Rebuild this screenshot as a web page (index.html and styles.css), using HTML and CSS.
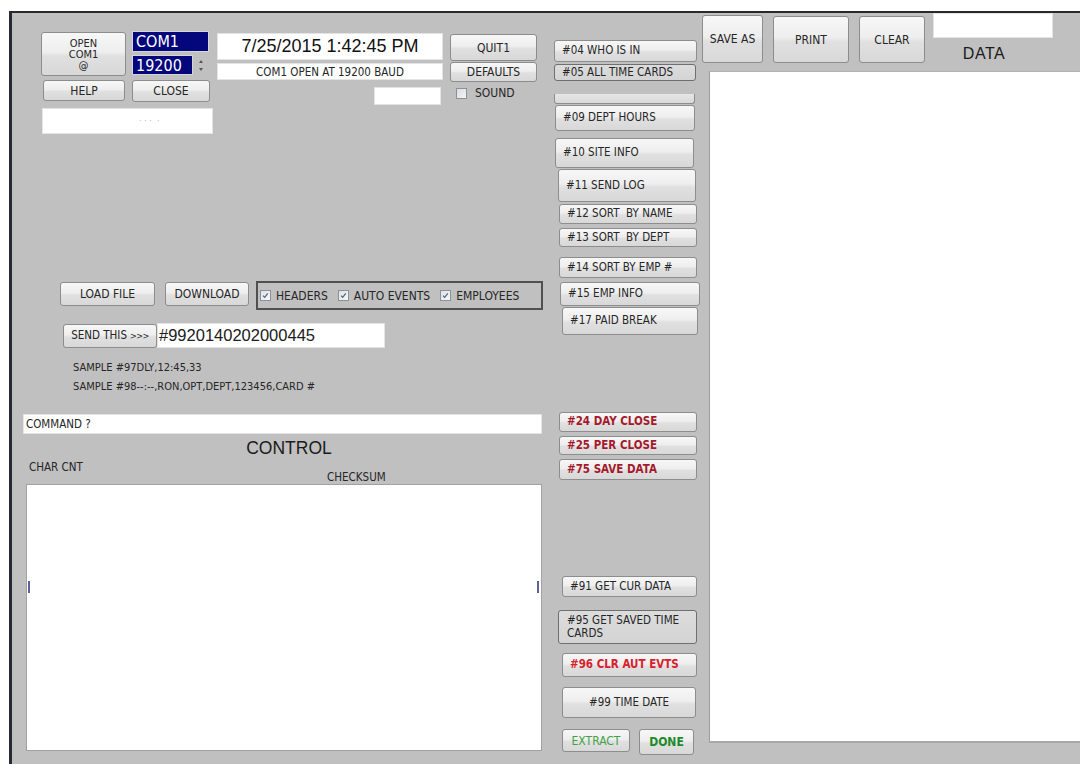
FILE: index.html
```html
<!DOCTYPE html>
<html lang="en">
<head>
<meta charset="utf-8">
<title>Time Clock Terminal</title>
<link rel="stylesheet" href="styles.css">
</head>
<body>
<div class="window">

  <!-- connection, file transfer and command console -->
  <div class="pane-left">
    <div class="conn">
      <div class="conn-port">
        <div class="port-row">
          <button class="btn btn-open"><span>OPEN<br>COM1<br>@</span></button>
          <div class="port-select">
            <div class="navy navy-port">COM1</div>
            <div class="spin">
              <div class="navy navy-baud">19200</div>
              <div class="spin-arrows"><span class="arrow-up"></span><span class="arrow-down"></span></div>
            </div>
          </div>
        </div>
        <div class="help-row">
          <button class="btn btn-help">HELP</button>
          <button class="btn btn-close">CLOSE</button>
        </div>
        <div class="field field-info"><span class="dots">· · ·&nbsp;&nbsp;·</span></div>
      </div>

      <div class="conn-status">
        <div class="field clock">7/25/2015 1:42:45 PM</div>
        <div class="field status">COM1 OPEN AT 19200 BAUD</div>
        <div class="field field-small"></div>
      </div>

      <div class="conn-actions">
        <button class="btn btn-quit">QUIT1</button>
        <button class="btn btn-defaults">DEFAULTS</button>
        <label class="check sound"><span class="box"></span>SOUND</label>
      </div>
    </div>

    <div class="file-row">
      <button class="btn btn-load">LOAD FILE</button>
      <button class="btn btn-download">DOWNLOAD</button>
      <div class="group">
        <span class="check"><span class="box"><svg viewBox="0 0 11 11"><path d="M2.5 5.6 L4.5 7.8 L8.3 2.8"/></svg></span>HEADERS</span>
        <span class="check"><span class="box"><svg viewBox="0 0 11 11"><path d="M2.5 5.6 L4.5 7.8 L8.3 2.8"/></svg></span>AUTO EVENTS</span>
        <span class="check"><span class="box"><svg viewBox="0 0 11 11"><path d="M2.5 5.6 L4.5 7.8 L8.3 2.8"/></svg></span>EMPLOYEES</span>
      </div>
    </div>

    <div class="send-row">
      <button class="btn btn-send">SEND THIS <span class="chevrons">&gt;&gt;&gt;</span></button>
      <div class="field send-input">#9920140202000445</div>
    </div>

    <div class="samples">
      <p>SAMPLE #97DLY,12:45,33</p>
      <p>SAMPLE #98--:--,RON,OPT,DEPT,123456,CARD #</p>
    </div>

    <div class="field command">COMMAND ?</div>
    <div class="control-title">CONTROL</div>
    <div class="labels">
      <span class="char-cnt">CHAR CNT</span>
      <span class="checksum">CHECKSUM</span>
    </div>
    <div class="field log">
      <div class="log-marks"><span></span><span></span></div>
    </div>
  </div>

  <!-- terminal command buttons -->
  <div class="pane-mid">
    <button class="btn cmd c04">#04 WHO IS IN</button>
    <button class="btn cmd sunk c05">#05 ALL TIME CARDS</button>
    <div class="cmd-cut"></div>
    <button class="btn cmd c09">#09 DEPT HOURS</button>
    <button class="btn cmd c10">#10 SITE INFO</button>
    <button class="btn cmd c11">#11 SEND LOG</button>
    <button class="btn cmd c12">#12 SORT&nbsp;&nbsp;BY NAME</button>
    <button class="btn cmd c13">#13 SORT&nbsp;&nbsp;BY DEPT</button>
    <button class="btn cmd c14">#14 SORT BY EMP #</button>
    <button class="btn cmd c15">#15 EMP INFO</button>
    <button class="btn cmd c17">#17 PAID BREAK</button>
    <button class="btn cmd warn c24">#24 DAY CLOSE</button>
    <button class="btn cmd warn c25">#25 PER CLOSE</button>
    <button class="btn cmd warn c75">#75 SAVE DATA</button>
    <button class="btn cmd c91">#91 GET CUR DATA</button>
    <button class="btn cmd sunk c95"><span>#95 GET SAVED TIME<br>CARDS</span></button>
    <button class="btn cmd danger c96">#96 CLR AUT EVTS</button>
    <button class="btn cmd c99">#99 TIME DATE</button>
    <div class="finish-row">
      <button class="btn btn-extract">EXTRACT</button>
      <button class="btn btn-done">DONE</button>
    </div>
  </div>

  <!-- output data panel -->
  <div class="pane-right">
    <div class="toolbar">
      <button class="btn btn-saveas">SAVE AS</button>
      <button class="btn btn-print">PRINT</button>
      <button class="btn btn-clear">CLEAR</button>
      <div class="data-head">
        <div class="field data-name"></div>
        <div class="data-label">DATA</div>
      </div>
    </div>
    <div class="field data"></div>
  </div>

</div>
</body>
</html>
```

FILE: styles.css
```css
* {
  box-sizing: border-box;
}

html,
body {
  margin: 0;
  height: 100%;
}

body {
  background: #fff;
  font-family: "DejaVu Sans Condensed", "DejaVu Sans", sans-serif;
  font-stretch: condensed;
  font-size: 12px;
  color: #262626;
  overflow: hidden;
}

p {
  margin: 0;
}

/* form window */
.window {
  margin: 11px 0 0 9px;
  height: 753px;
  border-left: 3px solid #262b31;
  border-top: 2px solid #262b31;
  background: #c0c0c0;
  display: flex;
}

.pane-left {
  width: 536px;
  display: flex;
  flex-direction: column;
}

.pane-mid {
  width: 153px;
  display: flex;
  flex-direction: column;
  align-items: flex-start;
}

.pane-right {
  flex: 1;
  display: flex;
  flex-direction: column;
}

/* shared controls */
.btn {
  font-family: inherit;
  font-stretch: condensed;
  font-size: 12px;
  color: #262626;
  margin: 0;
  padding: 0;
  border: 1px solid #8d8d8d;
  border-radius: 3px;
  background: linear-gradient(#f7f7f7, #eeeeee 45%, #e0e0e0 55%, #d8d8d8);
  display: flex;
  align-items: center;
  justify-content: center;
  line-height: 1;
  white-space: nowrap;
}

.field {
  background: #fff;
  border: 1px solid #e4e4e4;
}

.check {
  display: flex;
  align-items: center;
}

.box {
  width: 11px;
  height: 11px;
  margin-right: 5px;
  border: 1px solid #8c9199;
  background: linear-gradient(135deg, #dde1e6, #f8f8f8);
  display: flex;
}

.box svg {
  width: 100%;
  height: 100%;
}

.box path {
  fill: none;
  stroke: #4f5f82;
  stroke-width: 1.4;
}

/* connection block */
.conn {
  display: flex;
  align-items: flex-start;
  margin-top: 18px;
  padding-left: 29px;
}

.conn-port {
  width: 172px;
  display: flex;
  flex-direction: column;
}

.port-row {
  display: flex;
}

.btn-open {
  width: 85px;
  height: 44px;
  margin-top: 1px;
  font-size: 11px;
  line-height: 11px;
  text-align: center;
}

.port-select {
  margin-left: 6px;
  width: 77px;
  display: flex;
  flex-direction: column;
}

.navy {
  background: #04067c;
  color: #fff;
  font-size: 16px;
  border: 1px solid #d6d6d6;
  padding-left: 3px;
  display: flex;
  align-items: center;
}

.navy-port {
  height: 21px;
}

.spin {
  display: flex;
  margin-top: 3px;
  height: 20px;
}

.navy-baud {
  width: 61px;
  height: 20px;
}

.spin-arrows {
  flex: 1;
  display: flex;
  flex-direction: column;
  align-items: center;
  justify-content: space-around;
  padding: 2px 0;
}

.arrow-up,
.arrow-down {
  width: 0;
  height: 0;
  border-left: 2.5px solid transparent;
  border-right: 2.5px solid transparent;
}

.arrow-up {
  border-bottom: 3px solid #555;
}

.arrow-down {
  border-top: 3px solid #555;
}

.help-row {
  display: flex;
  margin-top: 4px;
}

.btn-help {
  margin-left: 2px;
  width: 82px;
  height: 21px;
}

.btn-close {
  margin-left: 7px;
  width: 78px;
  height: 22px;
}

.field-info {
  margin: 6px 0 0 1px;
  width: 171px;
  height: 26px;
  display: flex;
  align-items: center;
  padding-left: 96px;
  color: #b8b8b8;
  font-size: 9px;
}

.conn-status {
  margin-left: 4px;
  width: 226px;
  display: flex;
  flex-direction: column;
}

.clock {
  margin-top: 2px;
  height: 27px;
  font-family: "Liberation Sans", Arial, sans-serif;
  font-stretch: normal;
  font-size: 18px;
  color: #111;
  display: flex;
  align-items: center;
  justify-content: center;
}

.status {
  margin-top: 3px;
  height: 17px;
  font-size: 11.5px;
  display: flex;
  align-items: center;
  justify-content: center;
}

.field-small {
  margin-top: 7px;
  margin-right: 2px;
  align-self: flex-end;
  width: 67px;
  height: 18px;
}

.conn-actions {
  margin-left: 7px;
  width: 87px;
  display: flex;
  flex-direction: column;
}

.btn-quit {
  margin-top: 3px;
  height: 27px;
}

.btn-defaults {
  margin-top: 1px;
  height: 20px;
}

.sound {
  margin: 5px 0 0 6px;
  height: 12px;
}

.sound .box {
  margin-right: 8px;
  background: linear-gradient(135deg, #d9dcdf, #f4f4f4);
}

/* file transfer row */
.file-row {
  display: flex;
  align-items: flex-start;
  margin-top: 147px;
}

.btn-load {
  margin: 1px 0 0 48px;
  width: 95px;
  height: 24px;
}

.btn-download {
  margin: 1px 0 0 10px;
  width: 84px;
  height: 24px;
}

.group {
  margin-left: 7px;
  width: 287px;
  height: 29px;
  border: 2px solid #505050;
  display: flex;
  align-items: center;
  padding-left: 2px;
}

.group .check + .check {
  margin-left: 10px;
}

/* send row */
.send-row {
  display: flex;
  align-items: flex-start;
  margin-top: 13px;
}

.btn-send {
  margin: 1px 0 0 51px;
  width: 94px;
  height: 24px;
  font-size: 11.5px;
  gap: 3px;
}

.chevrons {
  font-size: 9px;
  letter-spacing: -0.5px;
}

.send-input {
  width: 228px;
  height: 25px;
  padding-left: 1px;
  font-family: "Liberation Sans", Arial, sans-serif;
  font-stretch: normal;
  font-size: 16.5px;
  color: #202020;
  display: flex;
  align-items: center;
}

.samples {
  margin: 10px 0 0 61px;
  font-size: 11px;
  line-height: 19px;
}

/* command console */
.command {
  margin: 18px 0 0 11px;
  width: 519px;
  height: 20px;
  padding-left: 2px;
  font-size: 11.5px;
  display: flex;
  align-items: center;
}

.control-title {
  margin-top: 4px;
  height: 20px;
  line-height: 20px;
  padding-left: 18px;
  text-align: center;
  font-family: "Liberation Sans", Arial, sans-serif;
  font-stretch: normal;
  font-size: 17.5px;
  color: #1a1a1a;
}

.labels {
  height: 26px;
  display: grid;
  grid-template-columns: 298px auto;
  align-items: start;
  padding-left: 17px;
  font-size: 11.5px;
}

.char-cnt {
  margin-top: 3px;
  line-height: 13px;
}

.checksum {
  margin-top: 13px;
  line-height: 13px;
}

.log {
  margin-left: 14px;
  width: 516px;
  height: 267px;
  border: 1px solid #a2a2a2;
}

.log-marks {
  margin-top: 96px;
  display: flex;
  justify-content: space-between;
  padding: 0 2px 0 1px;
}

.log-marks span {
  width: 2px;
  height: 12px;
  background: #5d5f9e;
}

/* command column */
.cmd {
  justify-content: flex-start;
  padding-left: 7px;
  font-size: 11.5px;
  text-align: left;
}

.sunk {
  background: linear-gradient(#dcdcdc, #d4d4d4);
  border-color: #6f6f6f;
}

.warn {
  color: #a51a2b;
  font-weight: bold;
}

.danger {
  color: #d8202c;
  font-weight: bold;
}

.c04 { margin: 27px 0 0 6px; width: 143px; height: 22px; }
.c05 { margin: 2px 0 0 6px; width: 142px; height: 17px; }
.c09 { margin: 1px 0 0 7px; width: 140px; height: 26px; }
.c10 { margin: 7px 0 0 7px; width: 139px; height: 30px; }
.c11 { margin: 1px 0 0 10px; width: 138px; height: 33px; }
.c12 { margin: 2px 0 0 11px; width: 138px; height: 20px; }
.c13 { margin: 4px 0 0 11px; width: 138px; height: 19px; }
.c14 { margin: 10px 0 0 11px; width: 138px; height: 21px; }
.c15 { margin: 4px 0 0 12px; width: 140px; height: 24px; }
.c17 { margin: 1px 0 0 14px; width: 136px; height: 28px; }
.c24 { margin: 77px 0 0 11px; width: 138px; height: 20px; }
.c25 { margin: 4px 0 0 11px; width: 138px; height: 19px; }
.c75 { margin: 4px 0 0 11px; width: 138px; height: 21px; }
.c91 { margin: 96px 0 0 14px; width: 135px; height: 21px; }
.c95 { margin: 13px 0 0 10px; width: 139px; height: 34px; line-height: 13px; padding-left: 8px; }
.c96 { margin: 9px 0 0 14px; width: 135px; height: 24px; }
.c99 { margin: 10px 0 0 14px; width: 134px; height: 31px; justify-content: center; padding-left: 0; }

/* button partly covered by the one below it */
.cmd-cut {
  margin: 13px 0 0 6px;
  width: 141px;
  height: 10px;
  border: 1px solid #8d8d8d;
  border-top: none;
  border-radius: 0 0 3px 3px;
  background: linear-gradient(#e6e6e6, #d9d9d9);
}

.finish-row {
  display: flex;
  align-items: flex-start;
  margin: 11px 0 0 14px;
}

.btn-extract {
  width: 68px;
  height: 23px;
  color: #43a147;
}

.btn-done {
  margin-left: 9px;
  width: 55px;
  height: 26px;
  color: #1d8a2a;
  font-weight: bold;
}

/* data panel */
.toolbar {
  display: flex;
  align-items: flex-start;
  height: 58px;
}

.btn-saveas {
  margin: 2px 0 0 1px;
  width: 61px;
  height: 48px;
}

.btn-print {
  margin: 3px 0 0 10px;
  width: 76px;
  height: 47px;
}

.btn-clear {
  margin: 3px 0 0 10px;
  width: 66px;
  height: 47px;
}

.data-head {
  margin-left: 8px;
  width: 120px;
  display: flex;
  flex-direction: column;
  align-items: center;
}

.data-name {
  width: 120px;
  height: 25px;
}

.data-label {
  margin-top: 6px;
  padding-right: 18px;
  line-height: 20px;
  font-family: "Liberation Sans", Arial, sans-serif;
  font-stretch: normal;
  font-size: 16px;
  letter-spacing: 0.5px;
  color: #1a1a1a;
}

.data {
  flex: 1;
  margin: 0 0 21px 8px;
  border: none;
  border-left: 1px solid #9c9c9c;
  border-top: 1px solid #b2b2b2;
  border-bottom: 2px solid #a8a8a8;
}
```
